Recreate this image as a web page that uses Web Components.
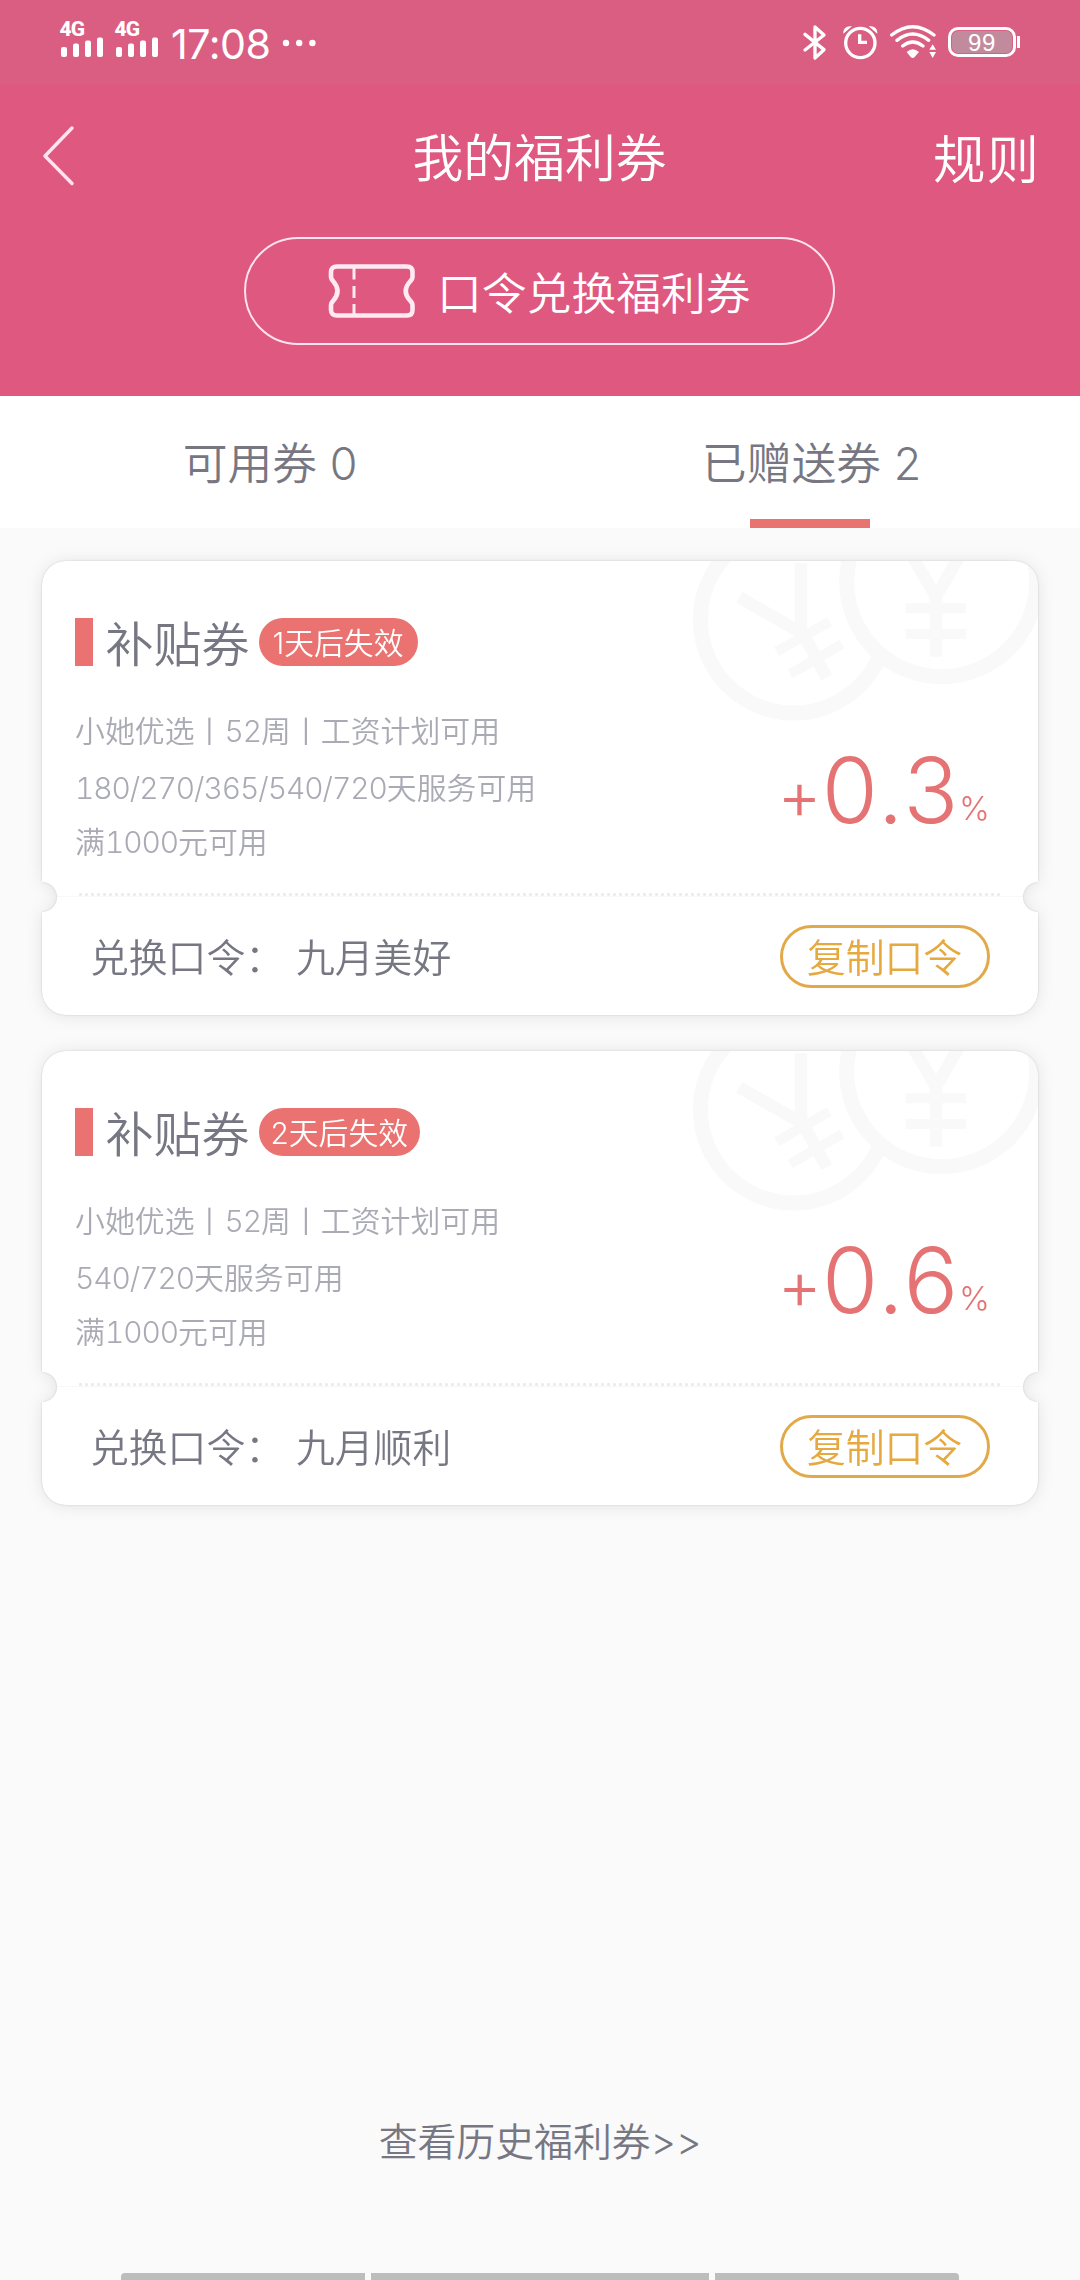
<!DOCTYPE html>
<html lang="zh-CN">
<head>
<meta charset="utf-8">
<title>我的福利券</title>
<style>
html,body{margin:0;padding:0}
body{width:1080px;height:2280px;overflow:hidden;background:#fafafa;color:#777783;font-family:Inter,"Noto Sans CJK SC",sans-serif;font-weight:350}
</style>
</head>
<body>
<coupon-page></coupon-page>
<script>
const define = (name, html, setup) => {
  const tpl = document.createElement('template');
  tpl.innerHTML = html;
  customElements.define(name, class extends HTMLElement {
    connectedCallback() {
      if (this.shadowRoot) return;
      const root = this.attachShadow({ mode: 'open' });
      root.append(tpl.content.cloneNode(true));
      if (setup) setup(this, root);
    }
  });
};

define('signal-bars', `
<style>
:host{display:flex;flex-direction:column;width:43px;height:36px;color:#fff}
b{font:800 21px/15px Roboto,sans-serif;letter-spacing:-.8px;height:15px;margin-left:-1.500px}
svg{display:block}
</style>
<b>4G</b>
<svg width="43" height="21" viewBox="0 0 43 21" fill="#fff"><rect x="0" y="10" width="6" height="10" rx="2"/><rect x="12" y="6.5" width="6" height="13.5" rx="2"/><rect x="24" y="3.5" width="6" height="16.5" rx="2"/><rect x="36" y="0.5" width="6" height="19.5" rx="2"/></svg>`);

define('status-bar', `
<style>
:host{display:flex;justify-content:space-between;height:84px;background:#da5e82;color:#fff;box-sizing:border-box;padding:22px 60px 0 61px}
.l,.r{display:flex;align-items:flex-start}
.l{gap:12px}
.t{font-size:41.200px;line-height:44px;font-weight:400;letter-spacing:-.5px;margin-left:0}
.dots{margin:17px 0 0 -1px}
svg{display:block}
.batt{width:72px;height:30px;margin:5px 0 0 1px;display:flex;background:linear-gradient(#fff,#fff) right 0 center/3px 12px no-repeat}
.batt span{box-sizing:border-box;width:68px;height:30px;border:3px solid #fff;border-radius:10px;background:#c28a9d content-box;padding:1px;text-align:center;font:400 24px/23px "Liberation Sans",sans-serif;letter-spacing:.6px}
</style>
<div class="l"><signal-bars></signal-bars><signal-bars></signal-bars><span class="t">17:08</span>
<svg class="dots" width="34" height="8" fill="#fff"><circle cx="4" cy="4" r="3.2"/><circle cx="17.2" cy="4" r="3.2"/><circle cx="30.400" cy="4" r="3.2"/></svg></div>
<div class="r">
<svg width="145" height="40" viewBox="125 66 435 120" fill="none" stroke="#fff" stroke-width="10" stroke-linecap="round" stroke-linejoin="round">
<path d="M134 103 L191 149 L164 174 V81 L191 105 L134 150"/>
<circle cx="300" cy="129" r="44"/><path d="M298 103 V127 H320" stroke-linecap="butt" stroke-linejoin="miter"/>
<path d="M249 101 C248 85 259 76 275 79 Z M351 101 C352 85 341 76 325 79 Z" fill="#fff" stroke="none"/>
<path d="M394 105 Q457 55 521 105 M410 121 Q457 83 505 121 M427 138 Q457 114 488 138"/>
<path d="M439 156 Q457 140 476 156 L463 171 Q457 177 451 171 Z" fill="#fff" stroke="none"/>
<path d="M517 133 L527 149 H507 Z M517 174 L527 156 H507 Z" fill="#fff" stroke="none"/>
</svg>
<div class="batt"><span>99</span></div></div>`);

define('nav-header', `
<style>
:host{display:flex;flex-direction:column;align-items:center;height:312px;background:#de587f;color:#fff}
.bar{align-self:stretch;display:grid;grid-template-columns:1fr auto 1fr;align-items:center;height:146px;padding:0 41px 0 42px;box-sizing:border-box}
h1{margin:4px 2px 0 0;font-size:50.8px;line-height:60px;font-weight:350}
.rule{justify-self:end;font-size:52.500px;line-height:60px;letter-spacing:1px;margin:6px -1px 0 0}
.pill{box-sizing:border-box;width:591px;height:108px;margin:7px 1px 0 0;border:2px solid #ffe4f0;border-radius:54px;display:flex;align-items:center;padding-left:81px;gap:22px;font-size:44.8px;line-height:56px}
.pill span{margin-top:5px}
svg{display:block}
.back{margin-top:-2px}
</style>
<div class="bar">
<svg class="back" width="34" height="62" viewBox="0 0 34 62" fill="none" stroke="#ffe3ee" stroke-width="3.5" stroke-linecap="round" stroke-linejoin="round"><path d="M30 3 L3 31 L30 58.500"/></svg>
<h1>我的福利券</h1><span class="rule">规则</span></div>
<div class="pill">
<svg width="88" height="56" viewBox="0 0 88 56" fill="none" stroke="#ffe9f2" stroke-width="4.600"><path d="M10 3.500 H80 Q85.500 3.500 85.500 9 V14 Q85.500 16 83.500 18 Q74 28 83.500 38 Q85.500 40 85.500 42 V47 Q85.500 52.500 80 52.500 H10 Q4 52.500 4 47 V42 Q4 40 6 38 Q15 28 6 18 Q4 16 4 14 V9 Q4 3.500 10 3.500 Z"/><path d="M27 5 V16.500 M27 23 V35 M27 41 V51" stroke-width="3"/></svg>
<span>口令兑换福利券</span></div>`);

define('coupon-tab', `
<style>
:host{flex:1;display:flex;flex-direction:column;align-items:center;justify-content:space-between;height:132px;font-size:44.800px}
span{line-height:56px;margin-top:40px;white-space:pre}
i{width:120px;height:9px;background:transparent}
:host([active]) i{background:#e97370}
:host([active]) span{margin-left:3px}
</style>
<span><slot></slot></span><i></i>`);

define('copy-button', `
<style>
:host{box-sizing:border-box;width:210px;height:63px;border:3px solid #e2a948;border-radius:32px;color:#e5a93f;display:flex;align-items:center;justify-content:center;font-size:38.8px;line-height:50px}
span{margin:4px 1px 0 0}
</style><span><slot></slot></span>`);

define('coupon-card', `
<style>
:host{display:block;filter:drop-shadow(0 0 1px rgba(0,0,0,.14)) drop-shadow(0 1px 8px rgba(0,0,0,.09))}
.card{position:relative;width:996px;height:454px;box-sizing:border-box;background:#fff;border-radius:24px;overflow:hidden;display:flex;flex-direction:column;
-webkit-mask:radial-gradient(circle 15px at 0 336px,transparent 14.5px,#000 15.5px) left/50% 100% no-repeat,radial-gradient(circle 15px at 100% 336px,transparent 14.5px,#000 15.5px) right/50% 100% no-repeat}
.coins{position:absolute;right:0;top:0}
.top{position:relative;display:flex;justify-content:space-between;height:332px;padding:57px 48px 0 33px;box-sizing:border-box}
.head{display:flex;align-items:center;height:48px}
.head i{width:18px;height:48px;background:#ea7270}
.head b{font-weight:350;font-size:48px;line-height:56px;margin:6px 0 0 12.500px}
.tag{box-sizing:border-box;min-width:159px;text-align:center;background:#ea7270;color:#fff;height:48px;line-height:51px;border-radius:24px;font-size:29.800px;padding:0 12px;margin-left:9px}
.info{color:#aaaab5;font-size:29.900px;display:flex;flex-direction:column;padding-top:37px;font-feature-settings:"tnum"}
.info>span{line-height:56px;height:56px}
.info>span:nth-child(2){line-height:59px}
.info>span:last-child{height:54px;line-height:55px}
.info em{font-style:normal;letter-spacing:-1.050px}
.val{display:flex;align-items:baseline;align-self:flex-start;color:#e57373;line-height:100px;margin-top:122px;font-weight:300}
.val .p{font-size:68px;line-height:96px;position:relative;top:-4px}
.val .n{font-size:91px;letter-spacing:2.200px;margin-right:-1.500px}
.val .u{font-size:33px;position:relative;top:-3px}
.dots{height:3px;margin:0 38px 0 37px;flex:none;background:radial-gradient(circle at 1.500px 1.500px,#ececee 1.300px,transparent 1.900px) 0 0/6px 3px repeat-x}
.seam{height:1px;background:#f8f8f8}
.bot{flex:1;display:flex;align-items:center;padding:0 48px 0 48px;font-size:38.800px;line-height:50px}
.bot>span{margin-top:4px}
.bot .v{margin-left:12px;flex:1}
</style>
<div class="card">
<svg class="coins" width="368" height="170" viewBox="0 33 1104 510" fill="none" stroke="#f9f9f9" stroke-width="45">
<circle cx="371" cy="209" r="280"/>
<path stroke-width="37" d="M393 40 V250 M208 142 L400 252 L470 382"/><path stroke-width="30" d="M320 305 L478 215 M361 372 L516 282"/>
<circle cx="815" cy="95" r="285" fill="#fff"/>
<path stroke-width="37" d="M725 16 L798 140 L870 16 M798 130 V320"/><path stroke-width="30" d="M707 175 H888 M707 252 H888"/>
</svg>
<div class="top"><div><div class="head"><i></i><b>补贴券</b><span class="tag"></span></div>
<div class="info"></div></div>
<div class="val"><span class="p">+</span><span class="n"></span><span class="u">%</span></div></div>
<div class="dots"></div><div class="seam"></div>
<div class="bot"><span>兑换口令：</span><span class="v"></span><copy-button>复制口令</copy-button></div>
</div>`, (el, root) => {
  root.querySelector('.tag').textContent = el.getAttribute('expires');
  root.querySelector('.n').textContent = el.getAttribute('rate');
  root.querySelector('.v').textContent = el.getAttribute('code');
  ['小她优选丨52周丨工资计划可用', el.getAttribute('terms'), '满1000元可用'].forEach(t => {
    const s = document.createElement('span');
    // Digit runs are set slightly tighter than the Chinese text around them.
    t.split(/([\d\/]+)/).filter(Boolean).forEach(part => {
      if (/^\d/.test(part)) {
        const em = document.createElement('em');
        em.textContent = part;
        s.append(em);
      } else s.append(part);
    });
    root.querySelector('.info').append(s);
  });
});

define('gesture-bar', `
<style>:host{display:flex;justify-content:center;gap:6px;height:7px}
i{width:244px;background:#bdbdbd;border-radius:4px 0 0 0}i:nth-of-type(2){width:338px;border-radius:0}i:nth-of-type(3){border-radius:0 4px 0 0}</style><i></i><i></i><i></i>`);

define('coupon-page', `
<style>
:host{display:flex;flex-direction:column;width:1080px;height:2280px}
.tabs{display:flex;background:#fff;height:132px}
.list{flex:1;display:flex;flex-direction:column;gap:36px;padding:33px 42px 0}
.more{text-align:center;font-size:38.900px;line-height:50px;margin-bottom:106px;letter-spacing:-.05px}
</style>
<status-bar></status-bar>
<nav-header></nav-header>
<div class="tabs"><coupon-tab>可用券 0</coupon-tab><coupon-tab active>已赠送券 2</coupon-tab></div>
<div class="list">
<coupon-card expires="1天后失效" rate="0.3" terms="180/270/365/540/720天服务可用" code="九月美好"></coupon-card>
<coupon-card expires="2天后失效" rate="0.6" terms="540/720天服务可用" code="九月顺利"></coupon-card>
</div>
<div class="more">查看历史福利券&gt;&gt;</div>
<gesture-bar></gesture-bar>`);
</script>
</body>
</html>
